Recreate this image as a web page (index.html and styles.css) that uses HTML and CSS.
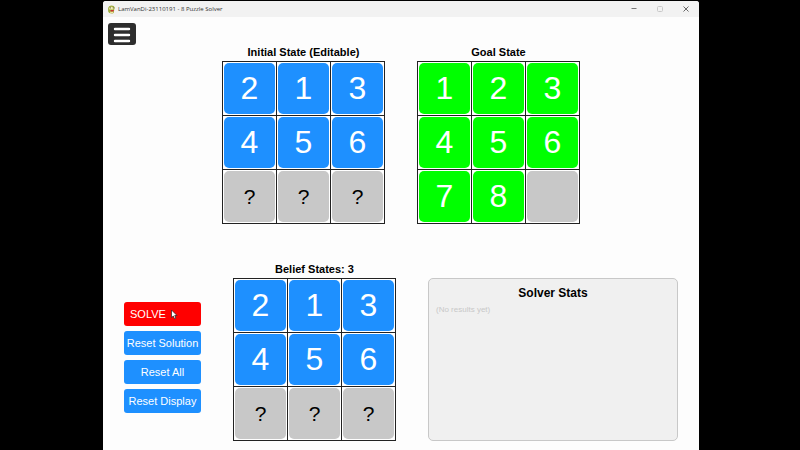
FILE: index.html
```html
<!DOCTYPE html>
<html lang="en">
<head>
<meta charset="utf-8">
<title>LamVanDi-23110191 - 8 Puzzle Solver</title>
<link rel="stylesheet" href="styles.css">
</head>
<body>
<div class="window">
  <header class="titlebar">
    <svg class="app-icon" viewBox="0 0 16 16" aria-hidden="true">
      <path d="M2 6 Q3 1 8 1 Q13 1 14 5 L12 10 Q14 14 9 15 Q3 15 2 11 Z" fill="#9dab3c"/>
      <path d="M4 5 Q8 1 12 5 L11 8 H4 Z" fill="#f3efb0"/>
      <circle cx="6" cy="5" r="1" fill="#555"/>
      <circle cx="11" cy="5" r="1" fill="#555"/>
      <path d="M6 9 H13 L10 12 H7 Z" fill="#c9352d"/>
      <path d="M5 12 H11 V14 H6 Z" fill="#eee7a0"/>
    </svg>
    <span class="title">LamVanDi-23110191 - 8 Puzzle Solver</span>
    <button class="control" aria-label="Minimize"><svg viewBox="0 0 8 8"><path d="M1.500 3.500H6.500" stroke="#777"/></svg></button>
    <button class="control" aria-label="Maximize" disabled><svg viewBox="0 0 8 8"><rect x="1.500" y="1.500" width="5" height="5" rx="1" stroke="#c8c8c8"/></svg></button>
    <button class="control" aria-label="Close"><svg viewBox="0 0 8 8"><path d="M1.500 1.500L6.500 6.500M6.500 1.500L1.500 6.500" stroke="#666"/></svg></button>
  </header>
  <main class="content">
    <button class="menu" aria-label="Menu"><svg viewBox="0 0 28 22"><path d="M7 6H21M7 12H21M7 18H21" stroke="#fff" stroke-width="2.400" stroke-linecap="round"/></svg></button>
    <div class="states">
      <section class="state">
        <h2>Initial State (Editable)</h2>
        <div class="board">
          <button class="tile">2</button><button class="tile">1</button><button class="tile">3</button>
          <button class="tile">4</button><button class="tile">5</button><button class="tile">6</button>
          <button class="tile unknown">?</button><button class="tile unknown">?</button><button class="tile unknown">?</button>
        </div>
      </section>
      <section class="state">
        <h2>Goal State</h2>
        <div class="board goal">
          <div class="tile">1</div><div class="tile">2</div><div class="tile">3</div>
          <div class="tile">4</div><div class="tile">5</div><div class="tile">6</div>
          <div class="tile">7</div><div class="tile">8</div><div class="tile unknown"></div>
        </div>
      </section>
    </div>
    <div class="solver">
      <div class="actions">
        <button class="action solve">SOLVE
          <svg class="cursor" viewBox="0 0 8 11" aria-hidden="true"><path d="M1.500 1V8.500L3.300 7L4.500 9.800L5.900 9.200L4.700 6.500H7Z" fill="#fff" stroke="#222" stroke-width=".7"/></svg>
        </button>
        <button class="action">Reset Solution</button>
        <button class="action">Reset All</button>
        <button class="action">Reset Display</button>
      </div>
      <section class="state">
        <h2>Belief States: 3</h2>
        <div class="board">
          <div class="tile">2</div><div class="tile">1</div><div class="tile">3</div>
          <div class="tile">4</div><div class="tile">5</div><div class="tile">6</div>
          <div class="tile unknown">?</div><div class="tile unknown">?</div><div class="tile unknown">?</div>
        </div>
      </section>
      <section class="stats">
        <h2>Solver Stats</h2>
        <p>(No results yet)</p>
      </section>
    </div>
  </main>
</div>
</body>
</html>
```
FILE: styles.css
```css
* { box-sizing: border-box; }

body {
  margin: 0;
  padding: 1px 101px 0 103px;
  min-height: 100vh;
  display: flex;
  background: #000;
  font-family: "Liberation Sans Narrow", "Liberation Sans", sans-serif;
}

button {
  margin: 0;
  padding: 0;
  border: 0;
  font: inherit;
}

h2, p { margin: 0; }

svg { display: block; fill: none; }

.window {
  flex: 1;
  background: #fdfdfd;
  border-radius: 3px 3px 0 0;
  overflow: hidden;
}

.titlebar {
  display: flex;
  align-items: center;
  height: 16px;
  padding: 0 8px 0 4px;
  background: #f2f2f2;
}

.app-icon { width: 9px; height: 9px; }

.title {
  flex: 1;
  padding-left: 2px;
  font: 6px/16px "Open Sans", sans-serif;
  color: #333;
}

.control {
  width: 10px;
  margin-left: 16px;
  background: none;
}

.control svg { width: 8px; height: 8px; margin: auto; }

.content { padding: 6px 21px 8px; }

.menu {
  display: block;
  width: 28px;
  height: 22px;
  margin-left: -16px;
  border-radius: 3px;
  background: #2d2d2d;
}

.states {
  display: flex;
  justify-content: center;
  gap: 32px;
}

.state { width: 163px; }

.state h2 {
  padding-bottom: 2px;
  font: bold 11px/14px "Liberation Sans", sans-serif;
  text-align: center;
  white-space: nowrap;
  color: #000;
}

.board {
  display: grid;
  grid-template-columns: repeat(3, 53px);
  grid-auto-rows: 53px;
  gap: 1px;
  padding: 1px;
  background: #222;
}

.tile {
  position: relative;
  z-index: 0;
  display: flex;
  align-items: center;
  justify-content: center;
  border: 1px solid #fff;
  background: #fff;
  font-size: 32px;
  line-height: 51px;
  color: #fff;
}

.tile::before {
  content: "";
  position: absolute;
  inset: 0;
  z-index: -1;
  border-radius: 5px;
  background: #1e90ff;
}

.goal .tile::before { background: #0f0; }

.board .unknown {
  font-size: 21px;
  color: #000;
}

.board .unknown::before { background: #c8c8c8; }

.solver {
  display: flex;
  align-items: flex-end;
  gap: 32px;
  margin-top: 38px;
}

.actions {
  display: grid;
  grid-template-columns: 100%;
  gap: 5px;
  width: 77px;
  margin-bottom: 28px;
}

.action {
  height: 24px;
  border-radius: 3px;
  background: #1e90ff;
  font-size: 11px;
  line-height: 24px;
  white-space: nowrap;
  color: #fff;
}

.solve {
  display: flex;
  align-items: center;
  gap: 4px;
  padding-left: 6px;
  background: #f00;
}

.cursor { width: 8px; height: 11px; }

.stats {
  flex: 1;
  align-self: stretch;
  margin-top: 16px;
  padding: 5px 7px;
  border: 1px solid #c8c8c8;
  border-radius: 5px;
  background: #f0f0f0;
}

.stats h2 {
  font-size: 12px;
  line-height: 18px;
  text-align: center;
  color: #000;
}

.stats p {
  font-size: 8px;
  line-height: 16px;
  color: #c8c8c8;
}
```
